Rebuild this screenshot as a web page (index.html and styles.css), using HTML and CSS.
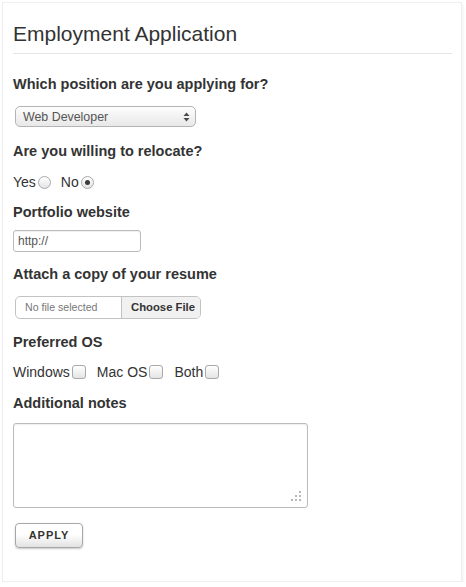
FILE: index.html
```html
<!DOCTYPE html>
<html>
<head>
<meta charset="utf-8">
<link rel="stylesheet" href="styles.css">
</head>
<body>
<div class="card">
  <h1 class="title">Employment Application</h1>
  <div class="label l1">Which position are you applying for?</div>
  <div class="select">
    <span>Web Developer</span>
    <svg class="arrows" width="7" height="10" viewBox="0 0 7 10"><path d="M3.5 0.5 L6.5 4 L0.5 4 Z M0.5 6 L6.5 6 L3.5 9.5 Z" fill="#4a4a4a"/></svg>
  </div>
  <div class="label l2">Are you willing to relocate?</div>
  <div class="options radios">
    <span class="opt">Yes<span class="radio"></span></span>
    <span class="opt">No<span class="radio checked"></span></span>
  </div>
  <div class="label l3">Portfolio website</div>
  <div class="textinput">http://</div>
  <div class="label l4">Attach a copy of your resume</div>
  <div class="file">
    <span class="file-name">No file selected</span>
    <span class="file-btn">Choose File</span>
  </div>
  <div class="label l5">Preferred OS</div>
  <div class="options checks">
    <span class="opt">Windows<span class="check"></span></span>
    <span class="opt">Mac OS<span class="check"></span></span>
    <span class="opt">Both<span class="check"></span></span>
  </div>
  <div class="label l6">Additional notes</div>
  <div class="textarea">
    <svg class="grip" width="10" height="10" viewBox="0 0 10 10"><g fill="#b8b8b8"><rect x="8" y="0" width="2" height="2"/><rect x="4" y="4" width="2" height="2"/><rect x="8" y="4" width="2" height="2"/><rect x="0" y="8" width="2" height="2"/><rect x="4" y="8" width="2" height="2"/><rect x="8" y="8" width="2" height="2"/></g></svg>
  </div>
  <div class="apply">APPLY</div>
</div>
</body>
</html>
```
FILE: styles.css
```css
html, body { margin: 0; padding: 0; background: #fff; }
body { font-family: "Liberation Sans", Arial, sans-serif; color: #333; }
.card {
  margin: 2px 0 0 2px;
  width: 460px;
  height: 580px;
  box-sizing: border-box;
  padding: 0 9px 0 10px;
  border: 1px solid #efefef;
  box-shadow: 1px 2px 3px rgba(0,0,0,0.07);
  display: flex;
  flex-direction: column;
  align-items: flex-start;
}
.title {
  align-self: stretch;
  margin: 16px 0 0 0;
  font-size: 21px;
  font-weight: normal;
  line-height: 30px;
  color: #333;
  padding-bottom: 4px;
  border-bottom: 1px solid #e5e5e5;
}
.label {
  font-size: 14.5px;
  font-weight: bold;
  line-height: 18px;
  color: #333;
  margin-top: 14px;
  margin-bottom: 12px;
}
.l1 { margin-top: 21px; margin-bottom: 13px; }
.l2 { margin-top: 15px; margin-bottom: 15px; }
.l3 { margin-top: 14px; margin-bottom: 9px; }
.l4 { margin-top: 13px; margin-bottom: 13px; }
.l5 { margin-top: 14px; margin-bottom: 13px; }
.l6 { margin-top: 14px; margin-bottom: 11px; }
.select {
  margin-left: 2px;
  width: 181px;
  height: 21px;
  box-sizing: border-box;
  border: 1px solid #b4b4b4;
  border-radius: 5px;
  background: linear-gradient(#fdfdfd, #e8e8e8);
  display: flex;
  align-items: center;
  justify-content: space-between;
  padding: 0 5px 0 7px;
  font-size: 12.4px;
  color: #555;
  white-space: nowrap;
}
.options { display: flex; align-items: center; font-size: 14px; line-height: 14px; color: #333; height: 14px; white-space: nowrap; }
.radios { gap: 10px; }
.checks { gap: 11px; height: 16px; }
.opt { display: inline-flex; align-items: center; }
.radio {
  width: 13px; height: 13px; box-sizing: border-box;
  border: 1px solid #a9a9a9; border-radius: 50%;
  background: linear-gradient(#fff, #e4e4e4);
  margin-left: 2px;
  display: inline-flex; align-items: center; justify-content: center;
}
.radio.checked::after { content: ""; width: 5px; height: 5px; border-radius: 50%; background: #3a3a3a; }
.check {
  width: 14px; height: 14px; box-sizing: border-box;
  border: 1px solid #a9a9a9; border-radius: 3px;
  background: linear-gradient(#fff, #e4e4e4);
  margin-left: 2px;
}
.textinput {
  width: 128px; height: 22px; box-sizing: border-box;
  border: 1px solid #bcbcbc; border-radius: 3px;
  box-shadow: inset 0 1px 1px rgba(0,0,0,0.07);
  font-size: 12px; color: #555;
  padding: 0 4px; line-height: 20px;
  white-space: nowrap;
}
.file {
  margin-left: 2px;
  width: 186px; height: 23px; box-sizing: border-box;
  border: 1px solid #c3c3c3; border-radius: 5px;
  display: flex; font-size: 11px; overflow: hidden;
  white-space: nowrap;
}
.file-name { width: 105px; flex: none; color: #777; padding-left: 9px; line-height: 21px; font-size: 10.6px; box-sizing: border-box; }
.file-btn {
  flex: 1; border-left: 1px solid #c3c3c3; background: #f1f1f1;
  font-weight: bold; color: #333; line-height: 21px; padding-left: 9px; font-size: 11.3px;
}
.textarea {
  width: 295px; height: 85px; box-sizing: border-box;
  border: 1px solid #bcbcbc; border-radius: 3px;
  box-shadow: inset 0 1px 2px rgba(0,0,0,0.07);
  position: relative;
  flex: none;
}
.grip { position: absolute; right: 6px; bottom: 6px; }
.apply {
  margin: 15px 0 0 2px;
  width: 68px; height: 25px; box-sizing: border-box;
  border: 1px solid #a8a8a8; border-radius: 4px;
  background: linear-gradient(#fff 45%, #e2e2e2);
  box-shadow: 0 1px 2px rgba(0,0,0,0.22);
  font-size: 11px; font-weight: bold; letter-spacing: 1px; color: #333;
  text-align: center; line-height: 23px;
  flex: none;
}
```
